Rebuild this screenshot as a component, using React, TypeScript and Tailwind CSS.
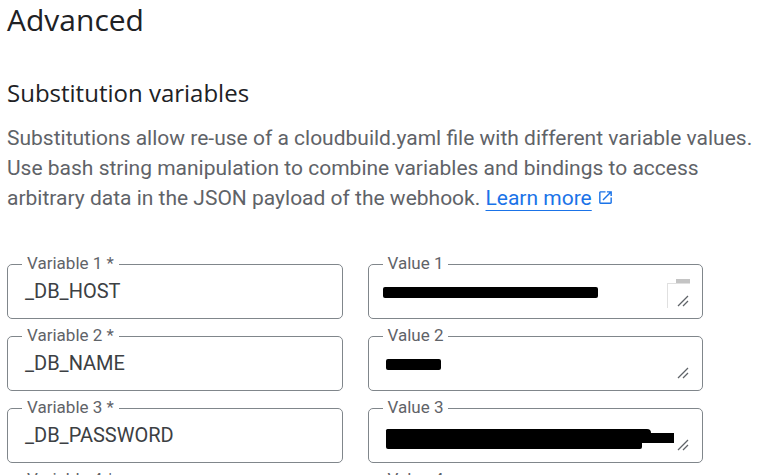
import type { ReactNode } from 'react'

const fields = [
  { variable: '_DB_HOST' },
  { variable: '_DB_NAME' },
  { variable: '_DB_PASSWORD' },
  { variable: '' },
]

function ResizeGrip() {
  return (
    <svg width="12" height="12" viewBox="0 0 12 12" className="absolute bottom-[11px] right-[13px]">
      <path d="M1 11L11 1M6 11L11 6" stroke="#5f6368" strokeWidth="1.3" />
    </svg>
  )
}

function OutlinedField({ label, children }: { label: string; children: ReactNode }) {
  return (
    <div className="relative h-[55px] rounded-[5px] border border-[#80868b] bg-white">
      <span className="absolute -top-[10px] left-[14px] bg-white px-[5px] text-[17px] leading-[17px] text-[#5f6368]">
        {label}
      </span>
      {children}
    </div>
  )
}

function RedactedValue({ index }: { index: number }) {
  if (index === 0) {
    return (
      <>
        <div className="ml-[14px] mt-[22px] h-[11px] w-[215px] rounded-[2px] bg-black" />
        <div className="absolute right-[12px] top-[14px] h-[4px] w-[14px] bg-[#c4c4c4]" />
        <div className="absolute right-[12px] top-[18px] h-[25px] w-[23px] border-l border-t border-[#e0e0e0]" />
        <ResizeGrip />
      </>
    )
  }
  if (index === 1) {
    return (
      <>
        <div className="ml-[17px] mt-[22px] h-[11px] w-[55px] rounded-[2px] bg-black" />
        <ResizeGrip />
      </>
    )
  }
  return (
    <>
      <div className="ml-[17px] mt-[20px] flex flex-col">
        <div className="h-[4px] w-[265px] rounded-tl-[3px] rounded-tr-[8px] bg-black" />
        <div className="h-[10px] w-[288px] bg-black" />
        <div className="h-[6px] w-[256px] rounded-b-[2px] bg-black" />
      </div>
      <ResizeGrip />
    </>
  )
}

export default function App() {
  return (
    <div className="min-h-screen bg-white px-[7px] text-[#202124]" style={{ fontFamily: 'Roboto, "Liberation Sans", sans-serif' }}>
      <h1 className="text-[30px] leading-[40px] font-normal text-[#202124]" style={{ fontFamily: '"Open Sans", sans-serif' }}>
        Advanced
      </h1>
      <h2 className="mt-[37px] text-[24px] leading-[32px] font-normal text-[#202124]" style={{ fontFamily: '"Open Sans", sans-serif' }}>
        Substitution variables
      </h2>
      <p className="mt-[14px] whitespace-nowrap text-[21px] leading-[30px] text-[#5f6368]">
        Substitutions allow re-use of a cloudbuild.yaml file with different variable values.
        <br />
        Use bash string manipulation to combine variables and bindings to access
        <br />
        arbitrary data in the JSON payload of the webhook.{' '}
        <a href="#" className="text-[#1a73e8] underline decoration-1 underline-offset-[5px]">
          Learn more
        </a>
        <svg width="17" height="17" viewBox="0 0 24 24" className="ml-[5px] inline-block align-[-1px]" fill="#1a73e8">
          <path d="M19 19H5V5h7V3H5c-1.11 0-2 .9-2 2v14c0 1.1.89 2 2 2h14c1.1 0 2-.9 2-2v-7h-2v7zM14 3v2h3.59l-9.83 9.83 1.41 1.41L19 6.41V10h2V3h-7z" />
        </svg>
      </p>

      <div className="mt-[51px] grid w-[696px] grid-cols-2 gap-x-[25px] gap-y-[17px]">
        {fields.map((field, i) => (
          <div key={i} className="contents">
            <OutlinedField label={`Variable ${i + 1} *`}>
              <div className="pl-[17px] pt-[14px] text-[20px] leading-[24px] text-[#3c4043]">{field.variable}</div>
            </OutlinedField>
            <OutlinedField label={`Value ${i + 1}`}>
              {i < 3 ? <RedactedValue index={i} /> : null}
            </OutlinedField>
          </div>
        ))}
      </div>
    </div>
  )
}
